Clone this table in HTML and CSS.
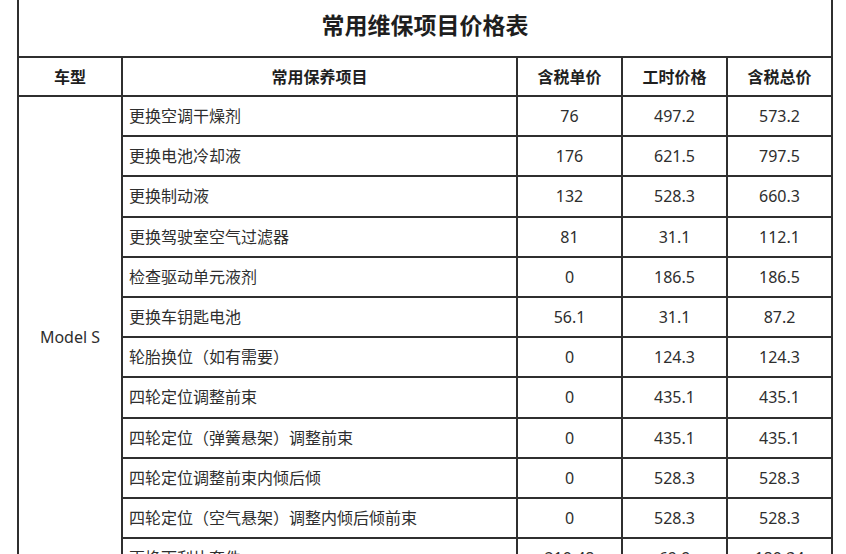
FILE: index.html
```html
<!DOCTYPE html>
<html lang="zh-CN">
<head>
<meta charset="utf-8">
<title>常用维保项目价格表</title>
<link rel="stylesheet" href="styles.css">
</head>
<body>
<div class="sheet">
  <table class="price">
    <colgroup>
      <col class="c-model">
      <col class="c-item">
      <col class="c-num">
      <col class="c-num">
      <col class="c-num">
    </colgroup>
    <tr class="title-row"><th colspan="5" class="title">常用维保项目价格表</th></tr>
    <tr class="head-row">
      <th>车型</th>
      <th>常用保养项目</th>
      <th>含税单价</th>
      <th>工时价格</th>
      <th>含税总价</th>
    </tr>
    <tr><td class="model" rowspan="12">Model S</td><td class="item">更换空调干燥剂</td><td>76</td><td>497.2</td><td>573.2</td></tr>
    <tr><td class="item">更换电池冷却液</td><td>176</td><td>621.5</td><td>797.5</td></tr>
    <tr><td class="item">更换制动液</td><td>132</td><td>528.3</td><td>660.3</td></tr>
    <tr><td class="item">更换驾驶室空气过滤器</td><td>81</td><td>31.1</td><td>112.1</td></tr>
    <tr><td class="item">检查驱动单元液剂</td><td>0</td><td>186.5</td><td>186.5</td></tr>
    <tr><td class="item">更换车钥匙电池</td><td>56.1</td><td>31.1</td><td>87.2</td></tr>
    <tr><td class="item">轮胎换位（如有需要）</td><td>0</td><td>124.3</td><td>124.3</td></tr>
    <tr><td class="item">四轮定位调整前束</td><td>0</td><td>435.1</td><td>435.1</td></tr>
    <tr><td class="item">四轮定位（弹簧悬架）调整前束</td><td>0</td><td>435.1</td><td>435.1</td></tr>
    <tr><td class="item">四轮定位调整前束内倾后倾</td><td>0</td><td>528.3</td><td>528.3</td></tr>
    <tr><td class="item">四轮定位（空气悬架）调整内倾后倾前束</td><td>0</td><td>528.3</td><td>528.3</td></tr>
    <tr><td class="item">更换雨刮片套件</td><td>210.48</td><td>69.9</td><td>180.34</td></tr>
  </table>
</div>
</body>
</html>
```

FILE: styles.css
```css
html, body {
  margin: 0;
  padding: 0;
  background: #ffffff;
  height: 100%;
  overflow: hidden;
}

.sheet {
  padding-left: 17px;
  font-family: "Noto Sans", "Noto Sans CJK SC", sans-serif;
  color: #2e2e2e;
}

.price {
  border-collapse: collapse;
  table-layout: fixed;
  width: 814px;
}

.c-model { width: 104px; }
.c-item { width: 395px; }
.c-num { width: 105px; }

.price th,
.price td {
  border: 2px solid #2f2f2f;
  padding: 0;
  font-size: 16px;
  line-height: 20px;
  text-align: center;
  height: 38.2px;
}

.price .title {
  border-top: none;
  height: 57px;
  font-size: 23px;
  font-weight: 700;
  color: #1e1e1e;
  vertical-align: top;
  padding-top: 10px;
  box-sizing: border-box;
  line-height: 30px;
}

.head-row th {
  font-weight: 700;
  color: #1f1f1f;
  height: 37px;
}

.price .item {
  text-align: left;
  padding-left: 6px;
}

.price .model {
  vertical-align: middle;
}
```
